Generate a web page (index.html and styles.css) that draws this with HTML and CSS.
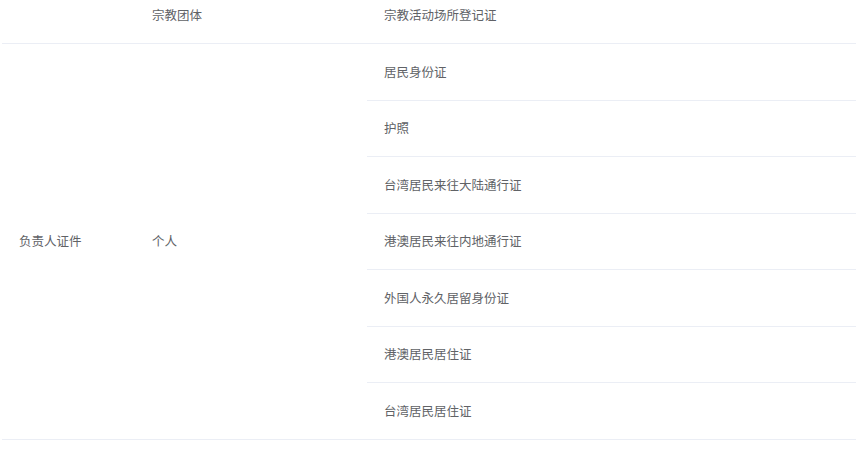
FILE: index.html
```html
<!DOCTYPE html>
<html lang="zh">
<head>
<meta charset="utf-8">
<link rel="stylesheet" href="styles.css">
</head>
<body>
<div class="wrap">
<table class="tbl">
  <colgroup>
    <col class="c1"><col class="c2"><col class="c3">
  </colgroup>
  <tbody>
    <tr><td></td><td>宗教团体</td><td>宗教活动场所登记证</td></tr>
    <tr><td rowspan="7">负责人证件</td><td rowspan="7">个人</td><td>居民身份证</td></tr>
    <tr><td>护照</td></tr>
    <tr><td>台湾居民来往大陆通行证</td></tr>
    <tr><td>港澳居民来往内地通行证</td></tr>
    <tr><td>外国人永久居留身份证</td></tr>
    <tr><td>港澳居民居住证</td></tr>
    <tr><td>台湾居民居住证</td></tr>
  </tbody>
</table>
</div>
</body>
</html>
```
FILE: styles.css
```css
html, body {
  margin: 0;
  padding: 0;
  background: #ffffff;
}
body {
  font-family: "Noto Sans CJK SC", "Noto Sans", sans-serif;
  font-size: 12.5px;
  color: #606266;
}
.wrap {
  padding-left: 2px;
  margin-top: -12.5px;
}
.tbl {
  width: 854px;
  border-collapse: collapse;
  table-layout: fixed;
}
.c1 { width: 133px; }
.c2 { width: 232px; }
.tbl td {
  height: 55.5px;
  padding: 0 0 0 17px;
  border-bottom: 1px solid #ebeef5;
  vertical-align: middle;
  text-align: left;
  line-height: 20px;
}
```
